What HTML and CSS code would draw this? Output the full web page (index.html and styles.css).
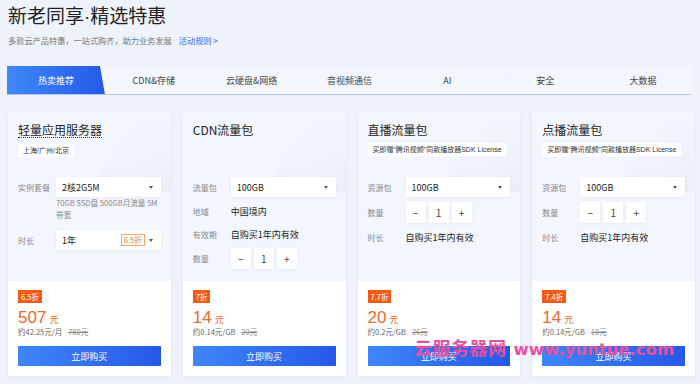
FILE: index.html
```html
<!DOCTYPE html>
<html lang="zh-CN">
<head>
    <meta charset="UTF-8">
    <title>新老同享·精选特惠</title>
    <link rel="stylesheet" href="styles.css">
</head>
<body>
<div class="page">
    <h1 class="title">新老同享<span class="dot">·</span>精选特惠</h1>
    <p class="sub">多款云产品特惠，一站式购齐，助力业务发展<a class="rule" href="#">活动规则 &gt;</a></p>

    <div class="tabs">
        <div class="tab active">热卖推荐</div>
        <div class="tab">CDN&amp;存储</div>
        <div class="tab">云硬盘&amp;网络</div>
        <div class="tab">音视频通信</div>
        <div class="tab">AI</div>
        <div class="tab">安全</div>
        <div class="tab">大数据</div>
    </div>

    <div class="cards">
        <!-- 轻量应用服务器 -->
        <div class="card">
            <div class="card-top">
                <div class="card-head">
                    <h2 class="card-title dotted">轻量应用服务器</h2>
                    <span class="tag">上海/广州/北京</span>
                </div>
                <div class="form">
                    <div class="row">
                        <span class="label">实例套餐</span>
                        <div class="select">2核2G5M<i class="arrow"></i></div>
                    </div>
                    <div class="desc">70GB SSD盘 500GB月流量 5M<br>带宽</div>
                    <div class="row">
                        <span class="label">时长</span>
                        <div class="select">1年<span class="off">6.5折</span><i class="arrow"></i></div>
                    </div>
                </div>
            </div>
            <div class="card-bottom">
                <span class="badge">6.5折</span>
                <div class="price"><b>507</b><span>元</span></div>
                <div class="unit">约42.25元/月<s>780元</s></div>
                <button class="buy">立即购买</button>
            </div>
        </div>

        <!-- CDN流量包 -->
        <div class="card">
            <div class="card-top">
                <div class="card-head">
                    <h2 class="card-title">CDN流量包</h2>
                </div>
                <div class="form">
                    <div class="row">
                        <span class="label">流量包</span>
                        <div class="select">100GB<i class="arrow"></i></div>
                    </div>
                    <div class="row text">
                        <span class="label">地域</span>
                        <span class="value">中国境内</span>
                    </div>
                    <div class="row text">
                        <span class="label">有效期</span>
                        <span class="value">自购买1年内有效</span>
                    </div>
                    <div class="row">
                        <span class="label">数量</span>
                        <div class="stepper"><span>−</span><span>1</span><span>+</span></div>
                    </div>
                </div>
            </div>
            <div class="card-bottom">
                <span class="badge">7折</span>
                <div class="price"><b>14</b><span>元</span></div>
                <div class="unit">约0.14元/GB<s>20元</s></div>
                <button class="buy">立即购买</button>
            </div>
        </div>

        <!-- 直播流量包 -->
        <div class="card">
            <div class="card-top">
                <div class="card-head">
                    <h2 class="card-title">直播流量包</h2>
                    <span class="tag">买即赠“腾讯视频”同款播放器SDK License</span>
                </div>
                <div class="form">
                    <div class="row">
                        <span class="label">资源包</span>
                        <div class="select">100GB<i class="arrow"></i></div>
                    </div>
                    <div class="row">
                        <span class="label">数量</span>
                        <div class="stepper"><span>−</span><span>1</span><span>+</span></div>
                    </div>
                    <div class="row text">
                        <span class="label">时长</span>
                        <span class="value">自购买1年内有效</span>
                    </div>
                </div>
            </div>
            <div class="card-bottom">
                <span class="badge">7.7折</span>
                <div class="price"><b>20</b><span>元</span></div>
                <div class="unit">约0.2元/GB<s>26元</s></div>
                <button class="buy">立即购买</button>
            </div>
        </div>

        <!-- 点播流量包 -->
        <div class="card">
            <div class="card-top">
                <div class="card-head">
                    <h2 class="card-title">点播流量包</h2>
                    <span class="tag">买即赠“腾讯视频”同款播放器SDK License</span>
                </div>
                <div class="form">
                    <div class="row">
                        <span class="label">资源包</span>
                        <div class="select">100GB<i class="arrow"></i></div>
                    </div>
                    <div class="row">
                        <span class="label">数量</span>
                        <div class="stepper"><span>−</span><span>1</span><span>+</span></div>
                    </div>
                    <div class="row text">
                        <span class="label">时长</span>
                        <span class="value">自购买1年内有效</span>
                    </div>
                </div>
            </div>
            <div class="card-bottom">
                <span class="badge">7.4折</span>
                <div class="price"><b>14</b><span>元</span></div>
                <div class="unit">约0.14元/GB<s>19元</s></div>
                <button class="buy">立即购买</button>
            </div>
        </div>
    </div>

    <div class="watermark"><span class="wm-cn">云服务器网</span><span class="wm-url">www.yuntue.com</span></div>
</div>
</body>
</html>
```

FILE: styles.css
```css
body {
    margin: 0;
    background-color: #eef2fa;
    font-family: 'Noto Sans CJK SC', 'Liberation Sans', sans-serif;
    color: #333;
}
.page {
    position: relative;
    width: 700px;
    height: 384px;
    padding: 0 5px 0 8px;
    box-sizing: border-box;
    overflow: hidden;
}
.title {
    margin: 0;
    padding-top: 3px;
    font-size: 19px;
    line-height: 24px;
    font-weight: normal;
    color: #222;
}
.dot {
    font-family: 'Liberation Sans', sans-serif;
}
.sub {
    margin: 5px 0 0;
    font-size: 8.2px;
    line-height: 12px;
    color: #777;
}
.rule {
    margin-left: 7px;
    color: #2e6cf0;
    text-decoration: none;
}
.tabs {
    display: flex;
    margin: 20px 3px 0 -1px;
    height: 28px;
    border-bottom: 1px solid #b4c7ea;
    background: linear-gradient(180deg, #f2f5fc, #f5f7fd);
}
.tab {
    flex: 1;
    display: flex;
    align-items: center;
    justify-content: center;
    font-size: 9px;
    color: #444;
}
.tab.active {
    color: #fff;
    background: linear-gradient(90deg, #3f88f9, #2559e8);
    clip-path: polygon(0 0, 95% 0, 100% 100%, 0 100%);
}
.cards {
    display: grid;
    grid-template-columns: repeat(4, 1fr);
    gap: 12px;
    margin-top: 17px;
}
.card {
    height: 264px;
    display: flex;
    flex-direction: column;
    box-shadow: 0 1px 4px rgba(90, 120, 190, 0.08);
}
.card-top {
    position: relative;
    height: 169px;
    flex: none;
    padding: 0 10px;
    background: linear-gradient(180deg, #f4f6fd, #f3f6fd);
    overflow: hidden;
}
.card-top::before {
    content: '';
    position: absolute;
    right: -30px;
    top: 10px;
    width: 90px;
    height: 70px;
    background: linear-gradient(135deg, rgba(255, 255, 255, 0), rgba(232, 237, 250, 0.9));
    transform: skewX(-35deg);
    border-radius: 6px;
}
.card-head {
    position: relative;
    height: 65px;
    padding-top: 11px;
    box-sizing: border-box;
}
.card-title {
    display: table;
    margin: 0;
    font-size: 12px;
    line-height: 14px;
    font-weight: normal;
    color: #222;
}
.card-title.dotted {
    border-bottom: 1px dotted #333;
}
.tag {
    display: table;
    margin-top: 6px;
    padding: 0 5px;
    height: 13px;
    line-height: 13px;
    font-family: 'Liberation Sans', 'Noto Sans CJK SC', sans-serif;
    font-size: 7px;
    white-space: nowrap;
    color: #333;
    background-color: #fff;
}
.form {
    position: relative;
    display: flex;
    flex-direction: column;
    gap: 5px;
}
.row {
    display: flex;
    align-items: center;
    min-height: 20px;
}
.row.text {
    height: 18px;
    min-height: 18px;
}
.label {
    width: 38px;
    flex: none;
    font-size: 8px;
    color: #888;
}
.select {
    position: relative;
    display: flex;
    align-items: center;
    flex: 1;
    height: 20px;
    padding: 0 6px;
    font-size: 9px;
    color: #222;
    background-color: #fff;
    border-radius: 1px;
    box-shadow: 0 1px 3px rgba(120, 140, 190, 0.1);
}
.arrow {
    position: absolute;
    right: 8px;
    top: 9px;
    border-left: 2.5px solid transparent;
    border-right: 2.5px solid transparent;
    border-top: 3px solid #555;
}
.off {
    margin-left: auto;
    margin-right: 10px;
    padding: 0 2px;
    font-size: 7.5px;
    line-height: 10px;
    color: #f07a3c;
    border: 1px solid #f5a675;
}
.desc {
    margin: -5px 0 4px 38px;
    font-size: 7.6px;
    line-height: 12px;
    color: #888;
}
.value {
    font-size: 9px;
    color: #222;
}
.stepper {
    display: flex;
    gap: 3px;
    height: 21px;
}
.stepper span {
    width: 20px;
    display: flex;
    align-items: center;
    justify-content: center;
    font-size: 10px;
    color: #444;
    background-color: #fff;
    box-shadow: 0 1px 3px rgba(120, 140, 190, 0.1);
}
.card-bottom {
    flex: 1;
    padding: 9px 10px 0;
    background-color: #fff;
}
.badge {
    display: table;
    height: 13px;
    line-height: 13px;
    padding: 0 3px;
    font-size: 7.5px;
    color: #fff;
    background-color: #f25a16;
}
.price {
    margin-top: 3px;
    height: 20px;
    line-height: 20px;
    color: #ee6a2a;
}
.price b {
    font-family: 'Liberation Sans', sans-serif;
    font-weight: normal;
    font-size: 17px;
}
.price span {
    margin-left: 3px;
    font-size: 9px;
}
.unit {
    height: 12px;
    line-height: 12px;
    font-size: 7.5px;
    color: #666;
}
.unit s {
    margin-left: 6px;
    color: #888;
}
.buy {
    display: block;
    width: 100%;
    height: 20px;
    margin-top: 8px;
    padding: 0;
    border: none;
    font-family: inherit;
    font-size: 9px;
    color: #fff;
    background: linear-gradient(90deg, #3f86f8, #2658e8);
    cursor: pointer;
}
.watermark {
    position: absolute;
    left: 414px;
    top: 334px;
    display: flex;
    align-items: baseline;
    color: #e6509f;
    pointer-events: none;
}
.wm-cn {
    font-size: 18px;
    font-weight: bold;
    letter-spacing: 0.5px;
}
.wm-url {
    margin-left: 7px;
    font-family: 'DejaVu Sans', sans-serif;
    font-weight: bold;
    font-size: 16.5px;
}
```
